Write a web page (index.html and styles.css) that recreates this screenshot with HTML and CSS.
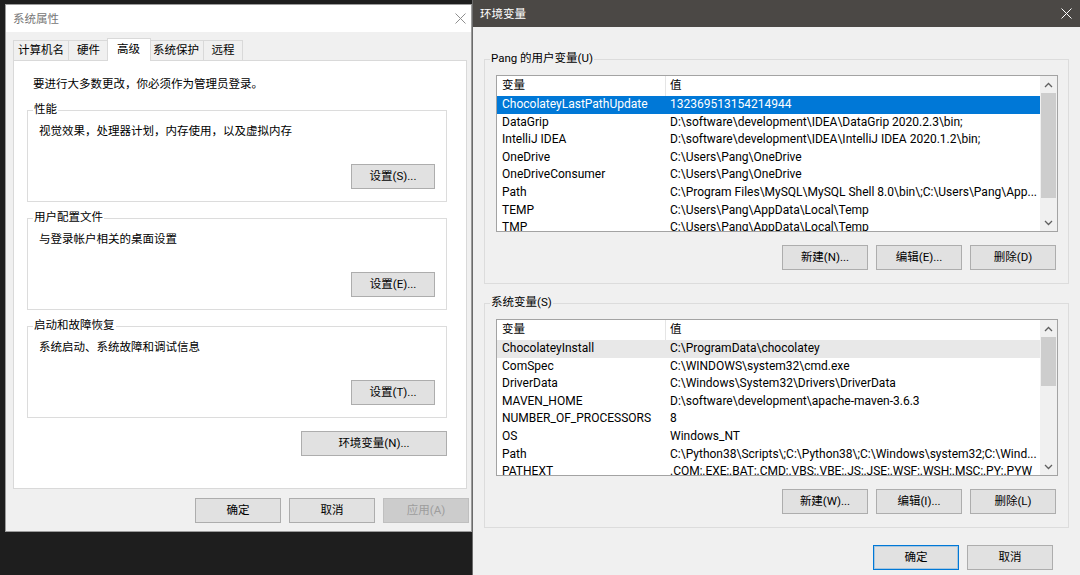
FILE: index.html
```html
<!DOCTYPE html>
<html lang="zh-CN">
<head>
<meta charset="utf-8">
<title>系统属性 / 环境变量</title>
<link rel="stylesheet" href="styles.css">
</head>
<body>
<div class="win win-sys">
  <div class="titlebar titlebar-light">
    <span class="title">系统属性</span>
    <svg class="close" width="11" height="11" viewBox="0 0 11 11"><path d="M0.5 0.5 L10.5 10.5 M10.5 0.5 L0.5 10.5" stroke="#8e8e8e" stroke-width="1" fill="none"/></svg>
  </div>
  <div class="sys-body">
    <div class="tabs">
      <div class="tab tab-first">计算机名</div>
      <div class="tab">硬件</div>
      <div class="tab tab-active">高级</div>
      <div class="tab">系统保护</div>
      <div class="tab tab-last">远程</div>
    </div>
    <div class="panel">
      <p class="note">要进行大多数更改，你必须作为管理员登录。</p>
      <div class="group group-first">
        <span class="group-label">性能</span>
        <p class="group-text">视觉效果，处理器计划，内存使用，以及虚拟内存</p>
        <button class="btn btn-set">设置(S)...</button>
      </div>
      <div class="group">
        <span class="group-label">用户配置文件</span>
        <p class="group-text">与登录帐户相关的桌面设置</p>
        <button class="btn btn-set">设置(E)...</button>
      </div>
      <div class="group">
        <span class="group-label">启动和故障恢复</span>
        <p class="group-text">系统启动、系统故障和调试信息</p>
        <button class="btn btn-set">设置(T)...</button>
      </div>
      <div class="env-row"><button class="btn btn-env">环境变量(N)...</button></div>
    </div>
    <div class="footer footer-sys">
      <button class="btn btn-foot">确定</button>
      <button class="btn btn-foot">取消</button>
      <button class="btn btn-foot btn-disabled">应用(A)</button>
    </div>
  </div>
</div>

<div class="win win-env">
  <div class="titlebar titlebar-dark">
    <span class="title">环境变量</span>
    <svg class="close close-env" width="11" height="11" viewBox="0 0 11 11"><path d="M0.5 0.5 L10.5 10.5 M10.5 0.5 L0.5 10.5" stroke="#ffffff" stroke-width="1" fill="none"/></svg>
  </div>
  <div class="env-body">
    <div class="egroup egroup-user">
      <span class="group-label group-label-gray">Pang 的用户变量(U)</span>
      <div class="lv">
        <div class="lv-main">
          <div class="lv-head"><span class="c1">变量</span><span class="c2">值</span></div>
          <div class="lv-row selected"><span class="c1">ChocolateyLastPathUpdate</span><span class="c2">132369513154214944</span></div>
          <div class="lv-row"><span class="c1">DataGrip</span><span class="c2">D:\software\development\IDEA\DataGrip 2020.2.3\bin;</span></div>
          <div class="lv-row"><span class="c1">IntelliJ IDEA</span><span class="c2">D:\software\development\IDEA\IntelliJ IDEA 2020.1.2\bin;</span></div>
          <div class="lv-row"><span class="c1">OneDrive</span><span class="c2">C:\Users\Pang\OneDrive</span></div>
          <div class="lv-row"><span class="c1">OneDriveConsumer</span><span class="c2">C:\Users\Pang\OneDrive</span></div>
          <div class="lv-row"><span class="c1">Path</span><span class="c2">C:\Program Files\MySQL\MySQL Shell 8.0\bin\;C:\Users\Pang\App...</span></div>
          <div class="lv-row"><span class="c1">TEMP</span><span class="c2">C:\Users\Pang\AppData\Local\Temp</span></div>
          <div class="lv-row"><span class="c1">TMP</span><span class="c2">C:\Users\Pang\AppData\Local\Temp</span></div>
        </div>
        <div class="sb">
          <div class="sb-btn"><svg width="9" height="6" viewBox="0 0 9 6"><path d="M1 5 L4.5 1.5 L8 5" stroke="#606060" stroke-width="1.3" fill="none"/></svg></div>
          <div class="sb-track"><div class="sb-thumb thumb-user"></div></div>
          <div class="sb-btn"><svg width="9" height="6" viewBox="0 0 9 6"><path d="M1 1 L4.5 4.5 L8 1" stroke="#606060" stroke-width="1.3" fill="none"/></svg></div>
        </div>
      </div>
      <div class="ebtn-row">
        <button class="btn btn-foot">新建(N)...</button>
        <button class="btn btn-foot">编辑(E)...</button>
        <button class="btn btn-foot">删除(D)</button>
      </div>
    </div>

    <div class="egroup egroup-sys">
      <span class="group-label group-label-gray">系统变量(S)</span>
      <div class="lv">
        <div class="lv-main">
          <div class="lv-head"><span class="c1">变量</span><span class="c2">值</span></div>
          <div class="lv-row hover"><span class="c1">ChocolateyInstall</span><span class="c2">C:\ProgramData\chocolatey</span></div>
          <div class="lv-row"><span class="c1">ComSpec</span><span class="c2">C:\WINDOWS\system32\cmd.exe</span></div>
          <div class="lv-row"><span class="c1">DriverData</span><span class="c2">C:\Windows\System32\Drivers\DriverData</span></div>
          <div class="lv-row"><span class="c1">MAVEN_HOME</span><span class="c2">D:\software\development\apache-maven-3.6.3</span></div>
          <div class="lv-row"><span class="c1">NUMBER_OF_PROCESSORS</span><span class="c2">8</span></div>
          <div class="lv-row"><span class="c1">OS</span><span class="c2">Windows_NT</span></div>
          <div class="lv-row"><span class="c1">Path</span><span class="c2">C:\Python38\Scripts\;C:\Python38\;C:\Windows\system32;C:\Wind...</span></div>
          <div class="lv-row"><span class="c1">PATHEXT</span><span class="c2">.COM;.EXE;.BAT;.CMD;.VBS;.VBE;.JS;.JSE;.WSF;.WSH;.MSC;.PY;.PYW</span></div>
        </div>
        <div class="sb">
          <div class="sb-btn"><svg width="9" height="6" viewBox="0 0 9 6"><path d="M1 5 L4.5 1.5 L8 5" stroke="#606060" stroke-width="1.3" fill="none"/></svg></div>
          <div class="sb-track"><div class="sb-thumb thumb-sys"></div></div>
          <div class="sb-btn"><svg width="9" height="6" viewBox="0 0 9 6"><path d="M1 1 L4.5 4.5 L8 1" stroke="#606060" stroke-width="1.3" fill="none"/></svg></div>
        </div>
      </div>
      <div class="ebtn-row">
        <button class="btn btn-foot">新建(W)...</button>
        <button class="btn btn-foot">编辑(I)...</button>
        <button class="btn btn-foot">删除(L)</button>
      </div>
    </div>

    <div class="footer footer-env">
      <button class="btn btn-foot btn-default">确定</button>
      <button class="btn btn-foot">取消</button>
    </div>
  </div>
</div>
</body>
</html>
```

FILE: styles.css
```css
* { box-sizing: border-box; margin: 0; padding: 0; }
html, body { width: 1080px; height: 575px; overflow: hidden; }
body {
  position: relative;
  background: #1e1e1e;
  font-family: Roboto, "Noto Sans CJK SC", sans-serif;
  font-size: 11.5px;
  color: #000;
}

/* windows on the desktop */
.win { position: absolute; display: flex; flex-direction: column; background: #f0f0f0; }
.win-sys { left: 5px; top: 4px; width: 467px; height: 528px; border: 1px solid #9b9b9b; }
.win-env { left: 472px; top: 0; width: 608px; height: 575px; border-left: 1px solid #6b6b6b; }

.titlebar { height: 27px; flex: 0 0 27px; display: flex; align-items: center; justify-content: space-between; padding-left: 7px; }
.titlebar-light { background: #fff; color: #767676; padding-right: 5px; }
.titlebar-dark { background: #4b4845; color: #fff; padding-right: 8px; }
.title { line-height: 16px; }
.close { display: block; }

/* left dialog */
.sys-body { flex: 1; display: flex; flex-direction: column; padding: 8px 2px 0 7px; }
.tabs { position: relative; z-index: 2; display: flex; align-items: flex-end; height: 21px; margin-bottom: -1px; }
.tab {
  height: 20px; margin-bottom: 1px; padding: 0 4px; min-width: 40px; text-align: center;
  line-height: 18px; background: #f0f0f0; border: 1px solid #d9d9d9; border-bottom: none; border-right: none;
}
.tab-last { border-right: 1px solid #d9d9d9; }
.tab-active {
  height: 23px; margin: 0 -2px 0 -1px; padding: 0 6px 2px 5px; min-width: 44px;
  line-height: 20px; background: #fff; border-right: 1px solid #d9d9d9; position: relative;
}
.tab-active + .tab { border-left: none; }

.panel {
  height: 429px; margin-right: 2px; background: #fff; border: 1px solid #d9d9d9;
  padding: 15px 19px 0 13px; display: flex; flex-direction: column;
}
.note { line-height: 16px; padding-left: 6px; }
.group {
  position: relative; height: 92px; margin-top: 16px; border: 1px solid #dcdcdc;
  padding: 12px 11px 12px 11px; display: flex; flex-direction: column;
}
.group-first { margin-top: 18px; }
.group-label { position: absolute; top: -9px; left: 5px; padding: 0 1px; line-height: 15px; background: #fff; }
.group-label-gray { background: #f0f0f0; }
.group-text { line-height: 16px; }
.env-row { display: flex; justify-content: flex-end; margin-top: 13px; }

.btn {
  font: inherit; color: #000; background: #e1e1e1; border: 1px solid #adadad;
  height: 25px; line-height: 23px; text-align: center; padding: 0;
}
.btn-set { margin-top: auto; align-self: flex-end; width: 84px; }
.btn-env { width: 146px; }
.btn-foot { width: 86px; }
.btn-disabled { background: #cccccc; border-color: #bfbfbf; color: #9d9d9d; }
.btn-default { border-color: #0078d7; box-shadow: inset 0 0 0 1px rgba(0, 120, 215, 0.25); }

.footer { display: flex; justify-content: flex-end; gap: 8px; }
.footer-sys { margin-top: 9px; }

/* right dialog */
.env-body { flex: 1; display: flex; flex-direction: column; padding: 0 11px; }
.egroup {
  position: relative; border: 1px solid #dcdcdc; padding: 15px 10px 13px 11px;
  display: flex; flex-direction: column;
}
.egroup-user { margin-top: 32px; }
.egroup-sys { margin-top: 19px; }
.ebtn-row { display: flex; justify-content: flex-end; gap: 8px; margin-top: 13px; padding-right: 2px; }

.lv { height: 157px; border: 1px solid #a3a3a3; background: #fff; display: flex; overflow: hidden; }
.lv-main { flex: 1; min-width: 0; overflow: hidden; }
.lv-head { display: flex; height: 20px; line-height: 19px; white-space: nowrap; }
.lv-head .c1 { border-right: 1px solid #e5e5e5; }
.lv-row { display: flex; height: 17.6px; line-height: 17.6px; white-space: nowrap; font-size: 12px; }
.c1 { flex: 0 0 169px; padding-left: 5px; overflow: hidden; }
.c2 { flex: 1; padding-left: 4px; overflow: hidden; }
.lv-row.selected { background: #0078d7; color: #fff; }
.lv-row.hover { background: #e8e8e8; }

.sb { flex: 0 0 17px; display: flex; flex-direction: column; background: #f0f0f0; }
.sb-btn { height: 17px; flex: 0 0 17px; display: flex; align-items: center; justify-content: center; }
.sb-btn svg { display: block; }
.sb-track { flex: 1; padding: 0 1px; }
.sb-thumb { background: #cdcdcd; }
.thumb-user { height: 105px; }
.thumb-sys { height: 49px; }

.footer-env { margin-top: 17px; padding-right: 16px; }
```
